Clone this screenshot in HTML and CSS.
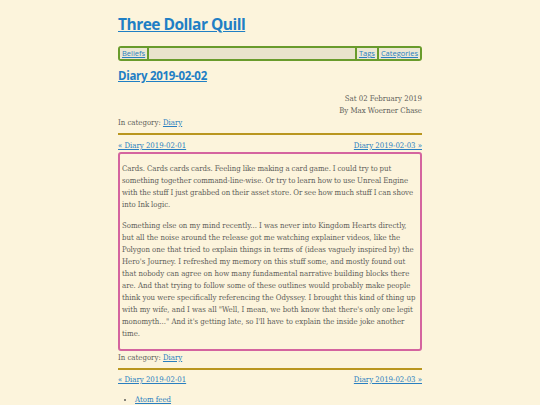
FILE: index.html
```html
<!DOCTYPE html>
<html lang="en">
<head>
<meta charset="utf-8">
<title>Diary 2019-02-02 - Three Dollar Quill</title>
<link rel="stylesheet" href="styles.css">
</head>
<body>
<div class="page">
  <header class="site-head">
    <h1 class="site-title"><a href="#">Three Dollar Quill</a></h1>
    <nav class="topnav">
      <a class="navlink navlink-left" href="#">Beliefs</a>
      <span class="navfill"></span>
      <a class="navlink navlink-right" href="#">Tags</a>
      <a class="navlink navlink-right" href="#">Categories</a>
    </nav>
  </header>
  <main class="content">
    <h2 class="entry-title"><a href="#">Diary 2019-02-02</a></h2>
    <div class="meta">
      <div>Sat 02 February 2019</div>
      <div>By Max Woerner Chase</div>
    </div>
    <p class="category">In category: <a href="#">Diary</a></p>
    <hr class="rule">
    <div class="pager">
      <a href="#">« Diary 2019-02-01</a>
      <a href="#">Diary 2019-02-03 »</a>
    </div>
    <article class="entry">
      <p class="tight">Cards. Cards cards cards. Feeling like making a card game. I could try to put something together command-line-wise. Or try to learn how to use Unreal Engine with the stuff I just grabbed on their asset store. Or see how much stuff I can shove into Ink logic.</p>
      <p>Something else on my mind recently... I was never into Kingdom Hearts directly, but all the noise around the release got me watching explainer videos, like the Polygon one that tried to explain things in terms of (ideas vaguely inspired by) the Hero's Journey. I refreshed my memory on this stuff some, and mostly found out that nobody can agree on how many fundamental narrative building blocks there are. And that trying to follow some of these outlines would probably make people think you were specifically referencing the Odyssey. I brought this kind of thing up with my wife, and I was all "Well, I mean, we both know that there's only one legit monomyth..." And it's getting late, so I'll have to explain the inside joke another time.</p>
    </article>
    <p class="category category-bottom">In category: <a href="#">Diary</a></p>
    <hr class="rule">
    <div class="pager pager-bottom">
      <a href="#">« Diary 2019-02-01</a>
      <a href="#">Diary 2019-02-03 »</a>
    </div>
    <ul class="feeds">
      <li><a href="#">Atom feed</a></li>
    </ul>
  </main>
</div>
</body>
</html>
```

FILE: styles.css
```css
html, body {
  margin: 0;
  padding: 0;
  background: #fcf4dc;
}

body {
  font-family: "DejaVu Serif Condensed", "DejaVu Serif", serif;
  font-stretch: condensed;
  font-size: 7.75px;
  line-height: 12px;
  color: #5e5e5a;
}

a {
  color: #2a7fc0;
}

.page {
  width: 304px;
  margin: 0 auto;
  padding-top: 13px;
}

.site-title {
  margin: 0;
  font-family: "Open Sans", sans-serif;
  font-stretch: normal;
  font-weight: 700;
  font-size: 15.5px;
  letter-spacing: -0.5px;
  line-height: 22px;
}

.site-title a {
  color: #1f7fc5;
}

.topnav {
  margin-top: 11px;
  display: flex;
  height: 11px;
  border: 2px solid #699b2c;
  border-radius: 3px;
  background: #e9e3cc;
  font-family: "Open Sans", sans-serif;
  font-stretch: normal;
  font-size: 7.5px;
  line-height: 11px;
}

.navlink {
  padding: 0 2px;
  background: #ece7d4;
}

.navlink-left {
  border-right: 2px solid #699b2c;
}

.navlink-right {
  border-left: 2px solid #699b2c;
}

.navfill {
  flex: 1;
}

.entry-title {
  margin: 7px 0 0;
  font-family: "Open Sans", sans-serif;
  font-stretch: normal;
  font-weight: 700;
  font-size: 11.5px;
  letter-spacing: -0.3px;
  line-height: 16px;
}

.entry-title a {
  color: #1f7fc5;
}

.meta {
  margin-top: 9px;
  text-align: right;
}

.category {
  margin: 0;
}

.category-bottom {
  margin-top: 1px;
}

.rule {
  margin: 4px 0 0;
  border: 0;
  border-top: 2px solid #b9961f;
  height: 0;
}

.pager {
  margin-top: 5px;
  display: flex;
  justify-content: space-between;
}

.pager-bottom {
  margin-top: 4px;
}

.entry {
  border: 2px solid #d4649f;
  border-radius: 3px;
  padding: 0 2px;
}

.entry p {
  margin: 9px 0;
}

.entry .tight {
  word-spacing: -0.3px;
}

.feeds {
  margin: 8px 0 0;
  padding-left: 17px;
}
```
